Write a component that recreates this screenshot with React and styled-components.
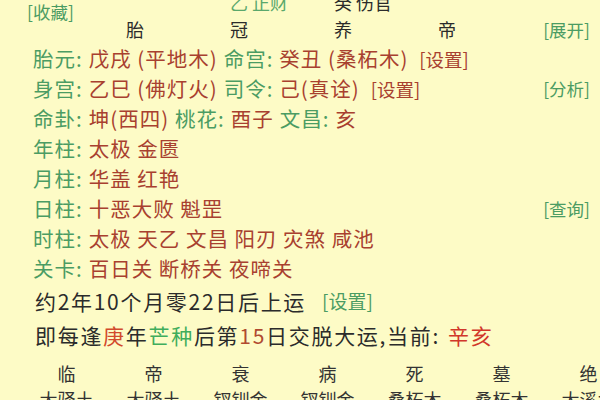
import styled, { createGlobalStyle } from "styled-components"

// colours picked from the screenshot
const GREEN = "#4b9c63"
const RED = "#a8402f"
const INK = "#2b2b2b"

const GlobalStyle = createGlobalStyle`
  html, body {
    margin: 0;
    padding: 0;
    background: #fdfbc6;
  }
`;

const Page = styled('div')`
  width: 600px;
  height: 400px;
  overflow: hidden;
  background: #fdfbc6;
  font-family: "Noto Sans CJK SC", "Noto Sans", sans-serif;
  color: ${INK};
`;

const Sheet = styled('div')`
  margin-top: -11px;
  display: flex;
  flex-direction: column;
`;

const TopGrid = styled('div')`
  display: grid;
  grid-template-columns: 126px repeat(4, 104px) 1fr;
  grid-template-rows: 26px 28px;
  align-items: center;
  font-size: 18px;
`;

const Collect = styled('div')`
  grid-column: 1;
  grid-row: 1 / span 2;
  align-self: start;
  margin-top: 11px;
  padding-left: 27px;
  line-height: 24px;
  font-size: 17.5px;
  color: ${GREEN};
`;

const Cell = styled('div')`
  grid-row: ${p => p.$row};
  grid-column: ${p => p.$col};
  color: ${p => p.$color || INK};
  white-space: nowrap;
  line-height: 24px;
`;

const SideLink = styled('span')`
  font-size: 17.5px;
  letter-spacing: 0;
  color: ${GREEN};
  white-space: nowrap;
`;

const TopSide = styled(SideLink)`
  grid-row: 2;
  grid-column: 6;
  justify-self: end;
  padding-right: 10px;
`;

const Row = styled('div')`
  display: flex;
  justify-content: space-between;
  align-items: center;
  height: ${p => p.$h || 30}px;
  padding: 0 10px 0 33px;
  font-size: 20.5px;
  letter-spacing: 1px;
  white-space: nowrap;
`;

const Line = styled('div')`
  display: flex;
  align-items: baseline;
`;

const Label = styled('span')`
  color: ${GREEN};
  margin-right: 6px;
`;

const Value = styled('span')`
  color: ${p => p.$color || RED};
  margin-right: ${p => p.$gap || 6}px;
`;

const Setting = styled('span')`
  font-size: ${p => p.$size || 18.5}px;
  letter-spacing: 0;
  color: ${p => p.$color || RED};
  margin-left: ${p => p.$gap || 10}px;
`;

const Fortune = styled('div')`
  display: flex;
  align-items: center;
  height: ${p => p.$h}px;
  padding-left: 35px;
  font-size: 21px;
  letter-spacing: 1.7px;
  white-space: nowrap;
`;

const Hi = styled('span')`
  color: ${p => p.$color};
  margin-left: ${p => p.$gap || 0}px;
`;

const StageGrid = styled('div')`
  display: grid;
  grid-template-columns: repeat(7, 87px);
  padding-left: 23px;
  margin-top: 9px;
  font-size: 18px;
  line-height: 26px;
`;

const Stage = styled('div')`
  text-align: center;
  white-space: nowrap;
  color: #333;
`;

const stages = ["临", "帝", "衰", "病", "死", "墓", "绝"]
const nayin = ["大驿土", "大驿土", "钗钏金", "钗钏金", "桑柘木", "桑柘木", "大溪水"]

const shensha = [
  { label: "年柱:", values: ["太极", "金匮"] },
  { label: "月柱:", values: ["华盖", "红艳"] },
  { label: "日柱:", values: ["十恶大败", "魁罡"], side: "[查询]" },
  { label: "时柱:", values: ["太极", "天乙", "文昌", "阳刃", "灾煞", "咸池"] },
  { label: "关卡:", values: ["百日关", "断桥关", "夜啼关"] },
]

function App() {
  return (
    <Page>
      <GlobalStyle />
      <Sheet>
        <TopGrid>
          <Collect>[收藏]</Collect>
          <Cell $row={1} $col={3} $color="#5aa86c">乙 正财</Cell>
          <Cell $row={1} $col={4}>癸 伤官</Cell>
          <Cell $row={2} $col={2}>胎</Cell>
          <Cell $row={2} $col={3}>冠</Cell>
          <Cell $row={2} $col={4}>养</Cell>
          <Cell $row={2} $col={5}>帝</Cell>
          <TopSide>[展开]</TopSide>
        </TopGrid>

        <Row>
          <Line>
            <Label>胎元:</Label>
            <Value>戊戌 (平地木)</Value>
            <Label>命宫:</Label>
            <Value>癸丑 (桑柘木)</Value>
            <Setting $gap={5}>[设置]</Setting>
          </Line>
        </Row>
        <Row>
          <Line>
            <Label>身宫:</Label>
            <Value>乙巳 (佛灯火)</Value>
            <Label>司令:</Label>
            <Value>己(真诠)</Value>
            <Setting $gap={5}>[设置]</Setting>
          </Line>
          <SideLink>[分析]</SideLink>
        </Row>
        <Row>
          <Line>
            <Label>命卦:</Label>
            <Value>坤(西四)</Value>
            <Label>桃花:</Label>
            <Value>酉子</Value>
            <Label>文昌:</Label>
            <Value>亥</Value>
          </Line>
        </Row>

        {shensha.map((s) => (
          <Row key={s.label}>
            <Line>
              <Label>{s.label}</Label>
              <Value>{s.values.join(" ")}</Value>
            </Line>
            {s.side && <SideLink>{s.side}</SideLink>}
          </Row>
        ))}

        <Fortune $h={35}>
          约2年10个月零22日后上运
          <Setting $color={GREEN} $gap={16} $size={19}>[设置]</Setting>
        </Fortune>
        <Fortune $h={33}>
          即每逢<Hi $color="#d24a2c">庚</Hi>年<Hi $color="#40ad5c">芒种</Hi>后第<Hi $color="#b04a30">15</Hi>日交脱大运,当前:
          <Hi $color="#d1372a" $gap={8}>辛亥</Hi>
        </Fortune>

        <StageGrid>
          {stages.map((s, i) => <Stage key={"s" + i}>{s}</Stage>)}
          {nayin.map((n, i) => <Stage key={"n" + i}>{n}</Stage>)}
        </StageGrid>
      </Sheet>
    </Page>
  )
}

export default App
